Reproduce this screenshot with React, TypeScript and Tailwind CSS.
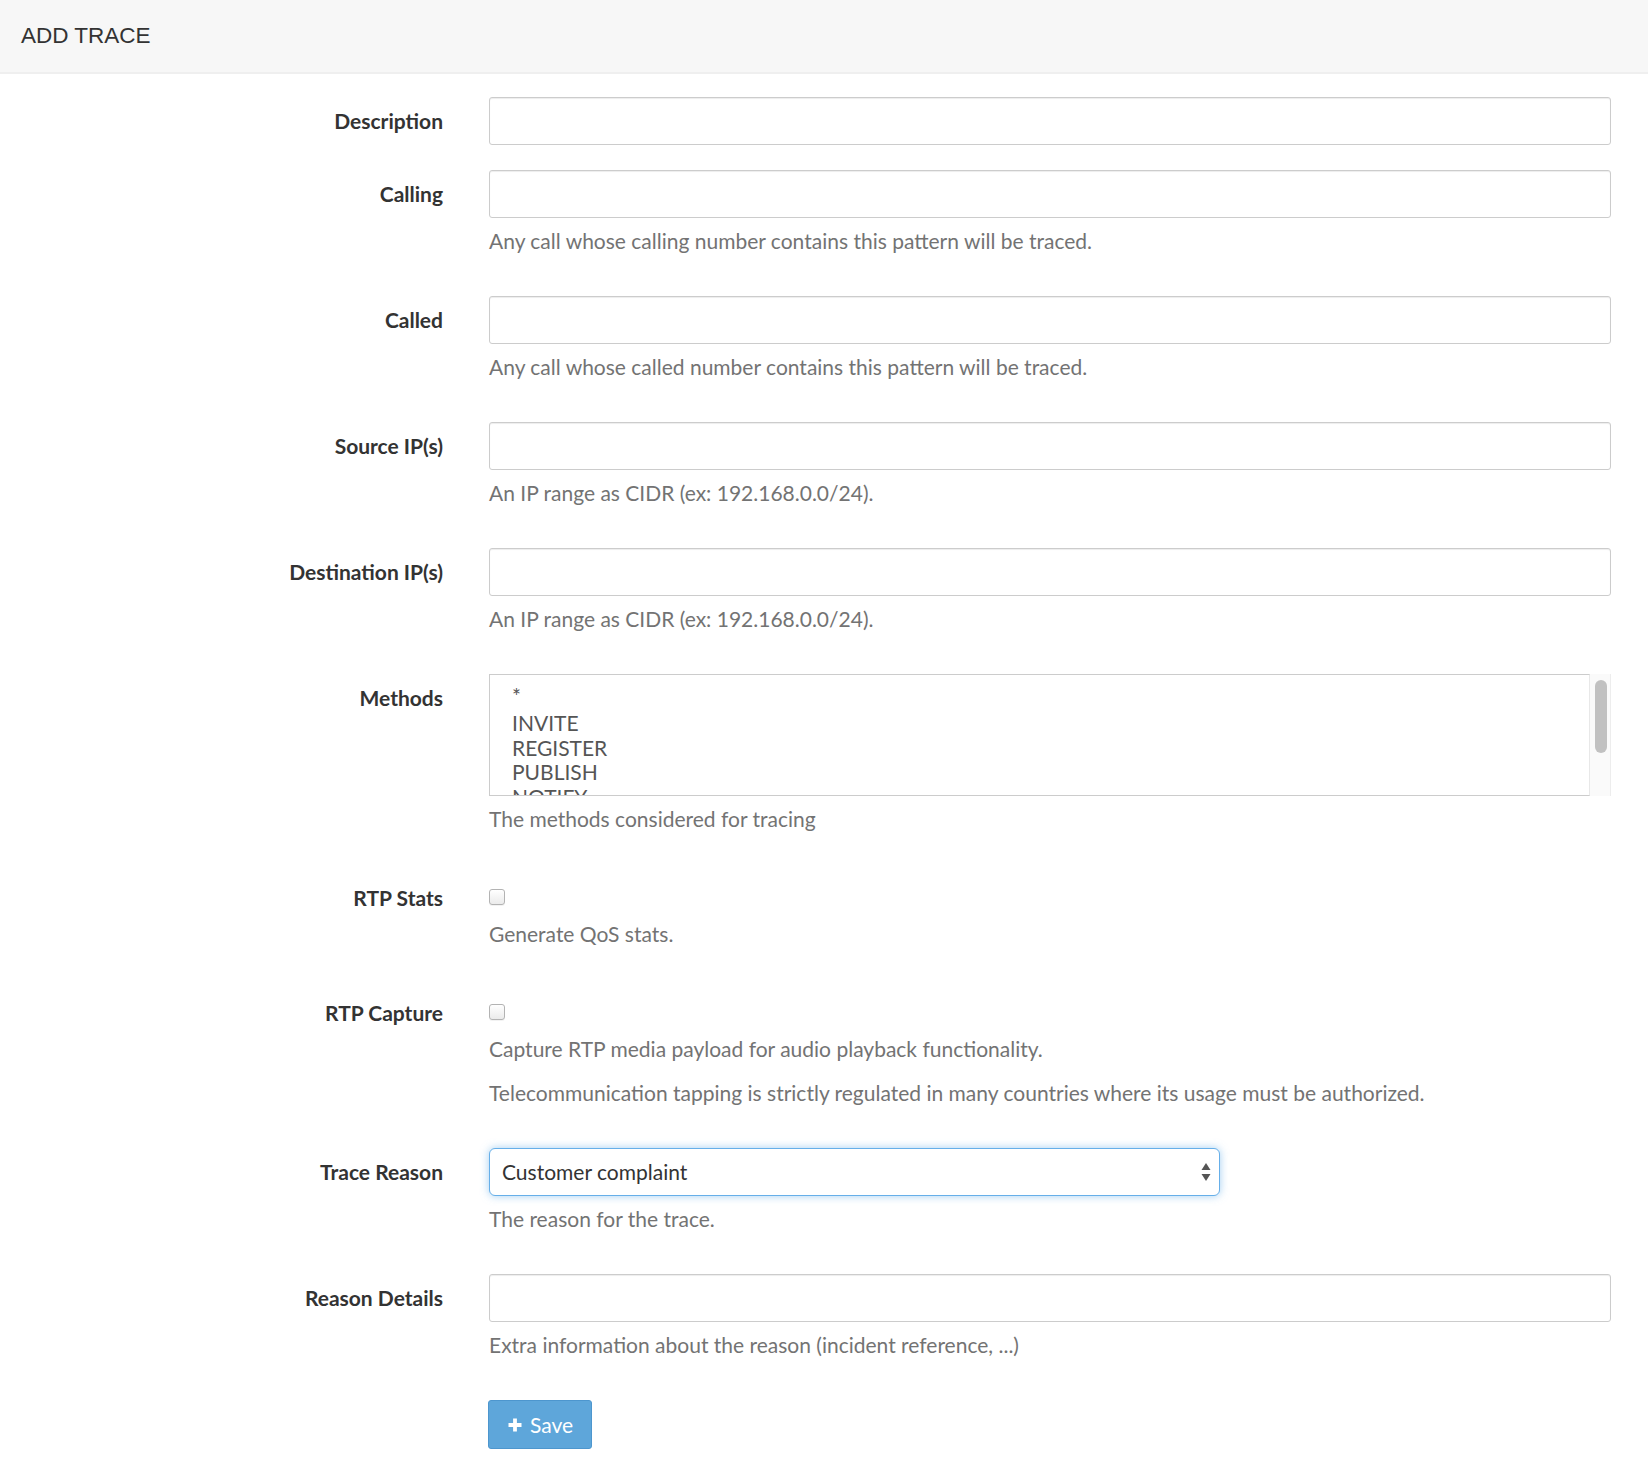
import React from 'react';

const methods = ['*', 'INVITE', 'REGISTER', 'PUBLISH', 'NOTIFY'];

const FormRow: React.FC<{ label: string; children: React.ReactNode }> = ({ label, children }) => (
    <div className="flex mb-[25px]">
        <label className="w-[443px] shrink-0 text-right pt-[10px] leading-[28px] text-[21px] font-bold text-[#333]">
            {label}
        </label>
        <div className="ml-[46px] w-[1122px]">{children}</div>
    </div>
);

const Help: React.FC<{ children: React.ReactNode }> = ({ children }) => (
    <p className="mt-[9px] mb-[16px] leading-[28px] text-[21px] text-[#737373]">{children}</p>
);

const TextInput: React.FC = () => (
    <input
        type="text"
        className="block w-full h-[48px] border border-[#ccc] rounded-[3px] shadow-[inset_0_1px_1px_rgba(0,0,0,0.075)] px-[17px] text-[21px] text-[#555] outline-none"
    />
);

const Checkbox: React.FC = () => (
    <div className="h-[37px] pt-[15px]">
        <div className="w-[16px] h-[16px] rounded-[3px] border border-[#b3b3b3] bg-gradient-to-b from-white to-[#ebebeb] shadow-[0_1px_0_rgba(0,0,0,0.05)]" />
    </div>
);

const App: React.FC = () => {
    return (
        <div className="min-h-screen bg-white font-['Lato','Open_Sans',sans-serif]">
            {/* Header */}
            <div className="h-[74px] bg-[#f7f7f7] border-b-2 border-[#efefef] pl-[21px] flex items-center">
                <h1 className="text-[22.5px] text-[#333] font-['Liberation_Sans',Arial,sans-serif] leading-none">ADD TRACE</h1>
            </div>

            <form className="pt-[23px]" onSubmit={(e) => e.preventDefault()}>
                <FormRow label="Description">
                    <TextInput />
                </FormRow>

                <FormRow label="Calling">
                    <TextInput />
                    <Help>Any call whose calling number contains this pattern will be traced.</Help>
                </FormRow>

                <FormRow label="Called">
                    <TextInput />
                    <Help>Any call whose called number contains this pattern will be traced.</Help>
                </FormRow>

                <FormRow label="Source IP(s)">
                    <TextInput />
                    <Help>An IP range as CIDR (ex: 192.168.0.0/24).</Help>
                </FormRow>

                <FormRow label="Destination IP(s)">
                    <TextInput />
                    <Help>An IP range as CIDR (ex: 192.168.0.0/24).</Help>
                </FormRow>

                {/* Multi-select with native-looking scrollbar */}
                <FormRow label="Methods">
                    <div className="flex h-[122px]">
                        <div className="flex-1 border border-[#ccc] border-r-[#e8e8e8] overflow-hidden pt-[6px] pl-[22px]">
                            {methods.map((m, i) => (
                                <div key={m} className={`${i === 0 ? 'leading-[30px]' : 'leading-[24.5px]'} text-[21px] text-[#555]`}>{m}</div>
                            ))}
                        </div>
                        <div className="w-[21px] bg-[#fafafa] border-r border-[#ededed] pt-[6px] pl-[5px]">
                            <div className="w-[12px] h-[73px] rounded-full bg-[#c1c1c1]" />
                        </div>
                    </div>
                    <Help>The methods considered for tracing</Help>
                </FormRow>

                <FormRow label="RTP Stats">
                    <Checkbox />
                    <Help>Generate QoS stats.</Help>
                </FormRow>

                <FormRow label="RTP Capture">
                    <Checkbox />
                    <Help>Capture RTP media payload for audio playback functionality.</Help>
                    <Help>Telecommunication tapping is strictly regulated in many countries where its usage must be authorized.</Help>
                </FormRow>

                <FormRow label="Trace Reason">
                    <div className="relative w-[731px] h-[48px]">
                        <select
                            defaultValue="complaint"
                            className="appearance-none w-full h-full bg-white border-[1.5px] border-[#66afe9] rounded-[6px] shadow-[0_0_8px_rgba(102,175,233,0.6)] pl-[12px] text-[21px] text-[#333] outline-none"
                        >
                            <option value="complaint">Customer complaint</option>
                            <option value="debug">Debugging</option>
                            <option value="legal">Legal interception</option>
                        </select>
                        <svg className="absolute right-[9px] top-[13px] pointer-events-none" width="10" height="22" viewBox="0 0 10 22">
                            <path d="M5 2 L9.5 9 L0.5 9 Z" fill="#555" />
                            <path d="M0.5 13 L9.5 13 L5 20 Z" fill="#555" />
                        </svg>
                    </div>
                    <Help>The reason for the trace.</Help>
                </FormRow>

                <FormRow label="Reason Details">
                    <TextInput />
                    <Help>Extra information about the reason (incident reference, ...)</Help>
                </FormRow>

                <div className="flex">
                    <div className="w-[443px] shrink-0" />
                    <div className="ml-[45px]">
                        <button
                            type="submit"
                            className="h-[49px] w-[104px] bg-[#5ea6da] border border-[#4d96ce] rounded-[3px] text-white text-[21px] flex items-center pl-[19px] gap-[8px]"
                        >
                            <svg width="14" height="14" viewBox="0 0 14 14">
                                <path d="M7 0.5 V13.5 M0.5 7 H13.5" stroke="white" strokeWidth="3.8" />
                            </svg>
                            <span>Save</span>
                        </button>
                    </div>
                </div>
            </form>
        </div>
    );
};

export default App;
